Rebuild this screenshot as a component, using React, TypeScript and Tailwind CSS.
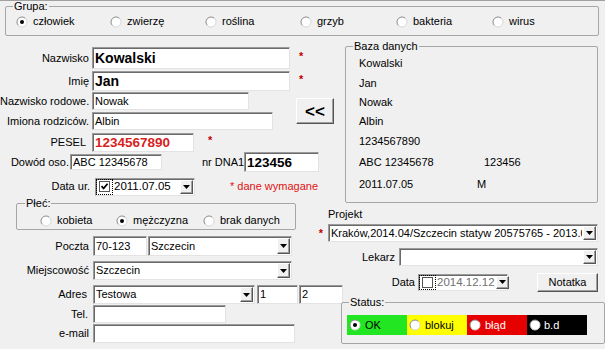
import type { ReactNode } from 'react';

// classic WinForms control chrome
const SUNKEN =
  'bg-white border border-t-[#9a9a9a] border-l-[#9a9a9a] border-r-[#e3e3e3] border-b-[#e3e3e3] shadow-[inset_1px_1px_0_#6a6a6a]';
const RAISED =
  'bg-[#f0f0f0] border border-t-white border-l-white border-r-[#555] border-b-[#555] shadow-[inset_-1px_-1px_0_#a0a0a0]';
const GROUP = 'border border-[#a6a6a6] rounded-[2px]';

function RadioDot({ on }: { on?: boolean }) {
  return (
    <svg width="12" height="12" viewBox="0 0 12 12" className="shrink-0">
      <circle cx="6" cy="6" r="5" fill="#fff" />
      <path d="M2.46 9.54A5 5 0 0 1 9.54 2.46" fill="none" stroke="#8a8a8a" />
      <path d="M9.54 2.46A5 5 0 0 1 2.46 9.54" fill="none" stroke="#d8d8d8" />
      {on && <circle cx="6" cy="6" r="2" fill="#000" />}
    </svg>
  );
}

function Radio({ label, on, className = '' }: { label: string; on?: boolean; className?: string }) {
  return (
    <div className={`flex shrink-0 items-center gap-[5px] whitespace-nowrap ${className}`}>
      <RadioDot on={on} />
      <span>{label}</span>
    </div>
  );
}

function Label({ className, children }: { className: string; children: ReactNode }) {
  return <span className={`shrink-0 whitespace-nowrap text-right ${className}`}>{children}</span>;
}

function DropButton() {
  return (
    <div className={`m-px flex w-[13px] shrink-0 items-center justify-center ${RAISED}`}>
      <svg width="7" height="4" viewBox="0 0 7 4">
        <path d="M0 0h7L3.5 4z" fill="#000" />
      </svg>
    </div>
  );
}

function Box({ className, children }: { className: string; children?: ReactNode }) {
  return (
    <div className={`flex shrink-0 items-center overflow-hidden whitespace-nowrap pl-[2px] ${SUNKEN} ${className}`}>
      {children}
    </div>
  );
}

function Combo({ className, children }: { className: string; children?: ReactNode }) {
  return (
    <div className={`flex shrink-0 ${SUNKEN} ${className}`}>
      <div className="flex min-w-0 flex-1 items-center overflow-hidden whitespace-nowrap pl-[2px]">{children}</div>
      <DropButton />
    </div>
  );
}

function DatePick({ className, checked, value, dim }: { className: string; checked?: boolean; value: string; dim?: boolean }) {
  return (
    <div className={`flex shrink-0 ${SUNKEN} ${className}`}>
      <div className="flex items-center border border-dotted border-black px-[2px]">
        <div className="flex h-[11px] w-[11px] items-center justify-center border border-[#555] bg-white">
          {checked && (
            <svg width="9" height="9" viewBox="0 0 9 9">
              <path d="M1.5 4.2 3.6 6.4 7.6 1.8" fill="none" stroke="#000" strokeWidth="1.7" />
            </svg>
          )}
        </div>
      </div>
      <span className={`flex items-center whitespace-nowrap pl-[1px] text-[11.5px] ${dim ? 'text-[#707070]' : ''}`}>{value}</span>
      <div className="flex-1" />
      <DropButton />
    </div>
  );
}

const Star = ({ className = '' }: { className?: string }) => (
  <span className={`shrink-0 font-bold text-[#c00000] ${className}`}>*</span>
);

export default function App() {
  return (
    <div className="h-[349px] w-[605px] overflow-hidden bg-[#f0f0f0] text-[11px] leading-[13px] text-black shadow-[inset_0_1px_0_#a0a0a0] [font-family:'Liberation_Sans',Arial,sans-serif]">
      {/* Grupa */}
      <fieldset className={`mx-[5px] h-[36px] w-[594px] ${GROUP}`}>
        <legend className="ml-[7px] px-px leading-[13px]">Grupa:</legend>
        <div className="mt-[2px] flex pl-[10px]">
          <Radio label="człowiek" on className="w-[94px]" />
          <Radio label="zwierzę" className="w-[95px]" />
          <Radio label="roślina" className="w-[95px]" />
          <Radio label="grzyb" className="w-[96px]" />
          <Radio label="bakteria" className="w-[96px]" />
          <Radio label="wirus" />
        </div>
      </fieldset>

      {/* osoba + baza danych */}
      <div className="mt-[4px] flex h-[157px] items-start">
        <div className="flex w-[340px] shrink-0 flex-col pt-[7px]">
          <div className="flex h-[22px] items-center">
            <Label className="w-[89px]">Nazwisko</Label>
            <Box className="ml-[3px] h-[22px] w-[198px] text-[14px] font-bold">Kowalski</Box>
            <Star className="ml-[9px] -mt-[4px]" />
          </div>
          <div className="mt-[2px] flex h-[20px] items-center">
            <Label className="w-[89px]">Imię</Label>
            <Box className="ml-[3px] h-[20px] w-[198px] text-[14px] font-bold">Jan</Box>
            <Star className="ml-[9px] -mt-[4px]" />
          </div>
          <div className="mt-[1px] flex">
            <div className="flex flex-col">
              <div className="flex h-[18px] items-center">
                <Label className="w-[89px]">Nazwisko rodowe.</Label>
                <Box className="ml-[3px] h-[18px] w-[157px]">Nowak</Box>
              </div>
              <div className="mt-[2px] flex h-[18px] items-center">
                <Label className="w-[89px]">Imiona rodziców.</Label>
                <Box className="ml-[3px] h-[18px] w-[181px]">Albin</Box>
              </div>
            </div>
            <button
              type="button"
              className={`ml-[23px] h-[26px] w-[38px] shrink-0 self-center text-[17px] font-bold leading-none ${RAISED}`}
            >
              &lt;&lt;
            </button>
          </div>
          <div className="mt-[3px] flex h-[19px] items-center">
            <Label className="w-[89px] pr-[3px]">PESEL</Label>
            <Box className="ml-[3px] h-[19px] w-[102px] text-[13.5px] font-bold text-[#d81e1e]">1234567890</Box>
            <Star className="ml-[14px] -mt-[4px]" />
          </div>
          <div className="flex h-[20px] items-center">
            <Label className="w-[69px]">Dowód oso.</Label>
            <Box className="ml-px h-[16px] w-[92px]">ABC 12345678</Box>
            <Label className="ml-[40px] w-[42px]">nr DNA1</Label>
            <Box className="h-[20px] w-[75px] text-[13.5px] font-bold">123456</Box>
          </div>
          <div className="mt-[5px] flex h-[19px] items-center">
            <Label className="w-[90px]">Data ur.</Label>
            <DatePick className="ml-[5px] h-[18px] w-[100px]" checked value="2011.07.05" />
            <span className="ml-[35px] whitespace-nowrap text-[#e01010]">* dane wymagane</span>
          </div>
        </div>

        <fieldset className={`ml-[5px] h-[163px] w-[253px] shrink-0 ${GROUP}`}>
          <legend className="ml-[7px] px-px leading-[13px]">Baza danych</legend>
          <div className="flex flex-col pl-[13px]">
            <div className="flex h-[20px] items-center">Kowalski</div>
            <div className="flex h-[20px] items-center">Jan</div>
            <div className="flex h-[19px] items-center">Nowak</div>
            <div className="flex h-[19px] items-center">Albin</div>
            <div className="flex h-[20px] items-center">1234567890</div>
            <div className="flex h-[22px] items-center">
              <span className="w-[125px]">ABC 12345678</span>
              <span>123456</span>
            </div>
            <div className="flex h-[22px] items-center">
              <span className="w-[118px]">2011.07.05</span>
              <span>M</span>
            </div>
          </div>
        </fieldset>
      </div>

      {/* adres + projekt */}
      <div className="flex">
        <div className="flex w-[318px] shrink-0 flex-col">
          <fieldset className={`ml-[16px] h-[33px] w-[280px] ${GROUP}`}>
            <legend className="ml-[8px] px-px leading-[13px]">Płeć:</legend>
            <div className="mt-[4px] flex pl-[23px]">
              <Radio label="kobieta" className="w-[76px]" />
              <Radio label="mężczyzna" on className="w-[87px]" />
              <Radio label="brak danych" />
            </div>
          </fieldset>
          <div className="mt-[6px] flex h-[20px] items-center">
            <Label className="w-[89px]">Poczta</Label>
            <Box className="ml-[4px] h-[20px] w-[54px]">70-123</Box>
            <Combo className="ml-px h-[20px] w-[144px]">Szczecin</Combo>
          </div>
          <div className="mt-[5px] flex h-[19px] items-center">
            <Label className="w-[89px]">Miejscowość</Label>
            <Combo className="ml-[4px] h-[19px] w-[199px]">Szczecin</Combo>
          </div>
          <div className="mt-[5px] flex h-[19px] items-center">
            <Label className="w-[89px] pr-[2px]">Adres</Label>
            <Combo className="ml-[4px] h-[19px] w-[162px]">Testowa</Combo>
            <Box className="ml-[2px] h-[19px] w-[41px]">1</Box>
            <Box className="ml-px h-[19px] w-[44px]">2</Box>
          </div>
          <div className="mt-px flex h-[18px] items-center">
            <Label className="w-[89px] pr-px">Tel.</Label>
            <Box className="ml-[4px] h-[18px] w-[133px]" />
          </div>
          <div className="mt-px flex h-[19px] items-center">
            <Label className="w-[89px]">e-mail</Label>
            <Box className="ml-[4px] h-[19px] w-[202px]" />
          </div>
        </div>

        <div className="flex min-w-0 flex-1 flex-col">
          <span className="ml-[10px] mt-[11px]">Projekt</span>
          <div className="mt-[3px] flex h-[18px] items-center">
            <Star className="w-[6px] text-center" />
            <Combo className="ml-[4px] h-[18px] w-[270px]">Kraków,2014.04/Szczecin statyw 20575765 - 2013.0</Combo>
          </div>
          <div className="mt-[6px] flex h-[18px] items-center">
            <Label className="w-[77px]">Lekarz</Label>
            <Combo className="ml-[4px] h-[18px] w-[199px]" />
          </div>
          <div className="mt-[7px] flex h-[18px] items-center">
            <Label className="w-[97px]">Data</Label>
            <DatePick className="ml-[3px] h-[17px] w-[90px]" value="2014.12.12" dim />
            <button type="button" className={`ml-[29px] h-[19px] w-[61px] shrink-0 ${RAISED}`}>
              Notatka
            </button>
          </div>
          <fieldset className={`ml-[23px] mt-[5px] h-[48px] w-[264px] shrink-0 ${GROUP}`}>
            <legend className="ml-[7px] px-px leading-[13px]">Status:</legend>
            <div className="ml-[5px] mt-[6px] flex h-[20px] w-[240px]">
              <div className="flex w-[60px] items-center gap-[4px] bg-[#22e622] pl-[2px]">
                <RadioDot on />
                <span>OK</span>
              </div>
              <div className="flex w-[60px] items-center gap-[4px] bg-[#ffff00] pl-[2px]">
                <RadioDot />
                <span>blokuj</span>
              </div>
              <div className="flex w-[60px] items-center gap-[4px] bg-[#e60000] pl-[2px] text-white">
                <RadioDot />
                <span>błąd</span>
              </div>
              <div className="flex w-[60px] items-center gap-[3px] bg-black pl-[2px] text-white">
                <RadioDot />
                <span>b.d</span>
              </div>
            </div>
          </fieldset>
        </div>
      </div>
    </div>
  );
}
